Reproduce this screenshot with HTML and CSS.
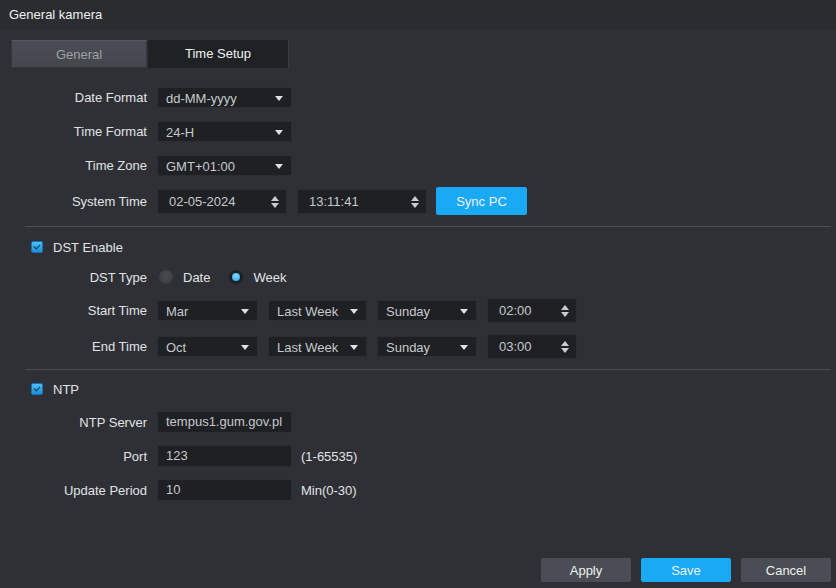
FILE: index.html
```html
<!DOCTYPE html>
<html lang="en">
  <head>
    <meta charset="UTF-8" />
    <title>General kamera</title>
    <link rel="stylesheet" href="styles.css">
  </head>
  <body>
    <header class="titleBar">General kamera</header>
    <nav class="tabs">
      <div class="tab">General</div>
      <div class="tab active">Time Setup</div>
    </nav>
    <main class="content">
      <div class="row r1">
        <label>Date Format</label>
        <div class="select w135">dd-MM-yyyy<i class="arrow"></i></div>
      </div>
      <div class="row">
        <label>Time Format</label>
        <div class="select w135">24-H<i class="arrow"></i></div>
      </div>
      <div class="row">
        <label>Time Zone</label>
        <div class="select w135">GMT+01:00<i class="arrow"></i></div>
      </div>
      <div class="row tall">
        <label>System Time</label>
        <div class="spin w130">02-05-2024<i class="updown"></i></div>
        <div class="spin w130">13:11:41<i class="updown"></i></div>
        <button class="btn blue sync">Sync PC</button>
      </div>

      <hr class="divider" />

      <div class="check first">
        <span class="box"></span>DST Enable
      </div>
      <div class="row dstType">
        <label>DST Type</label>
        <span class="radio"></span><span class="radioText">Date</span>
        <span class="radio on"></span><span class="radioText">Week</span>
      </div>
      <div class="row startRow">
        <label>Start Time</label>
        <div class="select w101">Mar<i class="arrow"></i></div>
        <div class="select w99">Last Week<i class="arrow"></i></div>
        <div class="select w100">Sunday<i class="arrow"></i></div>
        <div class="spin w90 time">02:00<i class="updown"></i></div>
      </div>
      <div class="row endRow">
        <label>End Time</label>
        <div class="select w101">Oct<i class="arrow"></i></div>
        <div class="select w99">Last Week<i class="arrow"></i></div>
        <div class="select w100">Sunday<i class="arrow"></i></div>
        <div class="spin w90 time">03:00<i class="updown"></i></div>
      </div>

      <hr class="divider" />

      <div class="check ntp">
        <span class="box"></span>NTP
      </div>
      <div class="row ntpRow">
        <label>NTP Server</label>
        <div class="input w135">tempus1.gum.gov.pl</div>
      </div>
      <div class="row">
        <label>Port</label>
        <div class="input w135">123</div>
        <span class="hint">(1-65535)</span>
      </div>
      <div class="row">
        <label>Update Period</label>
        <div class="input w135">10</div>
        <span class="hint">Min(0-30)</span>
      </div>
    </main>
    <footer class="actions">
      <button class="btn grey">Apply</button>
      <button class="btn blue">Save</button>
      <button class="btn grey">Cancel</button>
    </footer>
  </body>
</html>
```
FILE: styles.css
```css
html, body {
  margin: 0;
  height: 100%;
}
body {
  font-family: "Liberation Sans", Arial, sans-serif;
  font-size: 13px;
  color: #e1e3e6;
  background-color: #2e3035;
  display: flex;
  flex-direction: column;
  overflow: hidden;
}
.titleBar {
  height: 29px;
  line-height: 29px;
  padding-left: 9px;
  background-color: #2a2c30;
  color: #f0f0f0;
}
.tabs {
  display: flex;
  margin: 11px 0 0 11px;
}
.tab {
  height: 28px;
  line-height: 28px;
  text-align: center;
  width: 136px;
  color: #9ea2a8;
  background: linear-gradient(#4a4d53, #43464c);
  border: 1px solid #35373c;
  border-top-color: #55585e;
  box-sizing: border-box;
}
.tab.active {
  width: 141px;
  margin-left: 1px;
  color: #f2f2f2;
  background: #1f2124;
  border: none;
  border-right: 1px solid #3a3c41;
}
.content {
  display: flex;
  flex-direction: column;
}
.row {
  display: flex;
  align-items: center;
  height: 26px;
  margin-top: 8px;
}
.row.r1 { margin-top: 16px; }
.row.tall { height: 30px; }
.row label {
  width: 147px;
  text-align: right;
  margin-right: 10px;
  flex: none;
}
.select, .spin, .input {
  position: relative;
  height: 21px;
  line-height: 21px;
  background-color: #1e2023;
  border: 1px solid #2b2d31;
  border-radius: 2px;
  box-sizing: border-box;
  padding-left: 8px;
  color: #c6c9cd;
  margin-right: 10px;
  flex: none;
}
.spin {
  height: 25px;
  line-height: 23px;
  padding-left: 11px;
}
.w90 { width: 90px; }
.w99 { width: 99px; }
.w100 { width: 100px; }
.w101 { width: 101px; }
.w130 { width: 130px; }
.w135 { width: 135px; }
.arrow {
  position: absolute;
  right: 8px;
  top: 8px;
  width: 0;
  height: 0;
  border-left: 4px solid transparent;
  border-right: 4px solid transparent;
  border-top: 5px solid #e0e0e0;
}
.updown {
  position: absolute;
  right: 7px;
  top: 6px;
  width: 8px;
  height: 12px;
}
.updown::before, .updown::after {
  content: "";
  position: absolute;
  left: 0;
  border-left: 4px solid transparent;
  border-right: 4px solid transparent;
}
.updown::before {
  top: 0;
  border-bottom: 5px solid #c8cbd0;
}
.updown::after {
  bottom: 0;
  border-top: 5px solid #c8cbd0;
}
.btn {
  font-family: "Liberation Sans", Arial, sans-serif;
  font-size: 13px;
  border: none;
  border-radius: 2px;
  height: 24px;
  width: 90px;
  padding: 0;
  color: #eef0f2;
  cursor: pointer;
}
.btn.blue {
  background-color: #1aa9f4;
}
.btn.grey {
  background-color: #4a4d53;
}
.btn.sync {
  height: 28px;
  width: 91px;
  margin-left: -1px;
}
.divider {
  border: none;
  border-top: 1px solid #4a4d53;
  margin: 10px 5px 0 25px;
  height: 0;
}
.check {
  display: flex;
  align-items: center;
  height: 26px;
  padding-left: 31px;
  margin-top: 7px;
}
.check.ntp { margin-top: 6px; }
.box {
  width: 12px;
  height: 12px;
  box-sizing: border-box;
  border: 1px solid #1274b8;
  border-radius: 2px;
  margin-right: 10px;
  background: linear-gradient(#4cc0f7, #1c8fd8);
  position: relative;
}
.box::after {
  content: "";
  position: absolute;
  left: 3px;
  top: 1px;
  width: 3px;
  height: 5px;
  border-right: 1.5px solid #1b3550;
  border-bottom: 1.5px solid #1b3550;
  transform: rotate(45deg);
}
.row.dstType {
  margin-top: 4px;
}
.radio {
  width: 14px;
  height: 14px;
  border-radius: 50%;
  background: radial-gradient(circle at 50% 40%, #4a4d53, #35373c);
  box-sizing: border-box;
  margin-left: 2px;
  margin-right: 10px;
  position: relative;
}
.radio.on {
  background: #1e2023;
}
.radio.on::after {
  content: "";
  position: absolute;
  left: 3px;
  top: 3px;
  width: 8px;
  height: 8px;
  border-radius: 50%;
  background: radial-gradient(circle at 50% 35%, #8ad8ff, #1aa2ea);
}
.radioText {
  margin-right: 17px;
}
.row.startRow { margin-top: 7px; }
.row.endRow { margin-top: 10px; }
.row.ntpRow { margin-top: 7px; }
.input {
  height: 22px;
  line-height: 20px;
}
.hint {
  margin-left: -1px;
}
.actions {
  margin-top: auto;
  display: flex;
  justify-content: flex-end;
  gap: 10px;
  padding: 0 5px 6px 0;
}
```
